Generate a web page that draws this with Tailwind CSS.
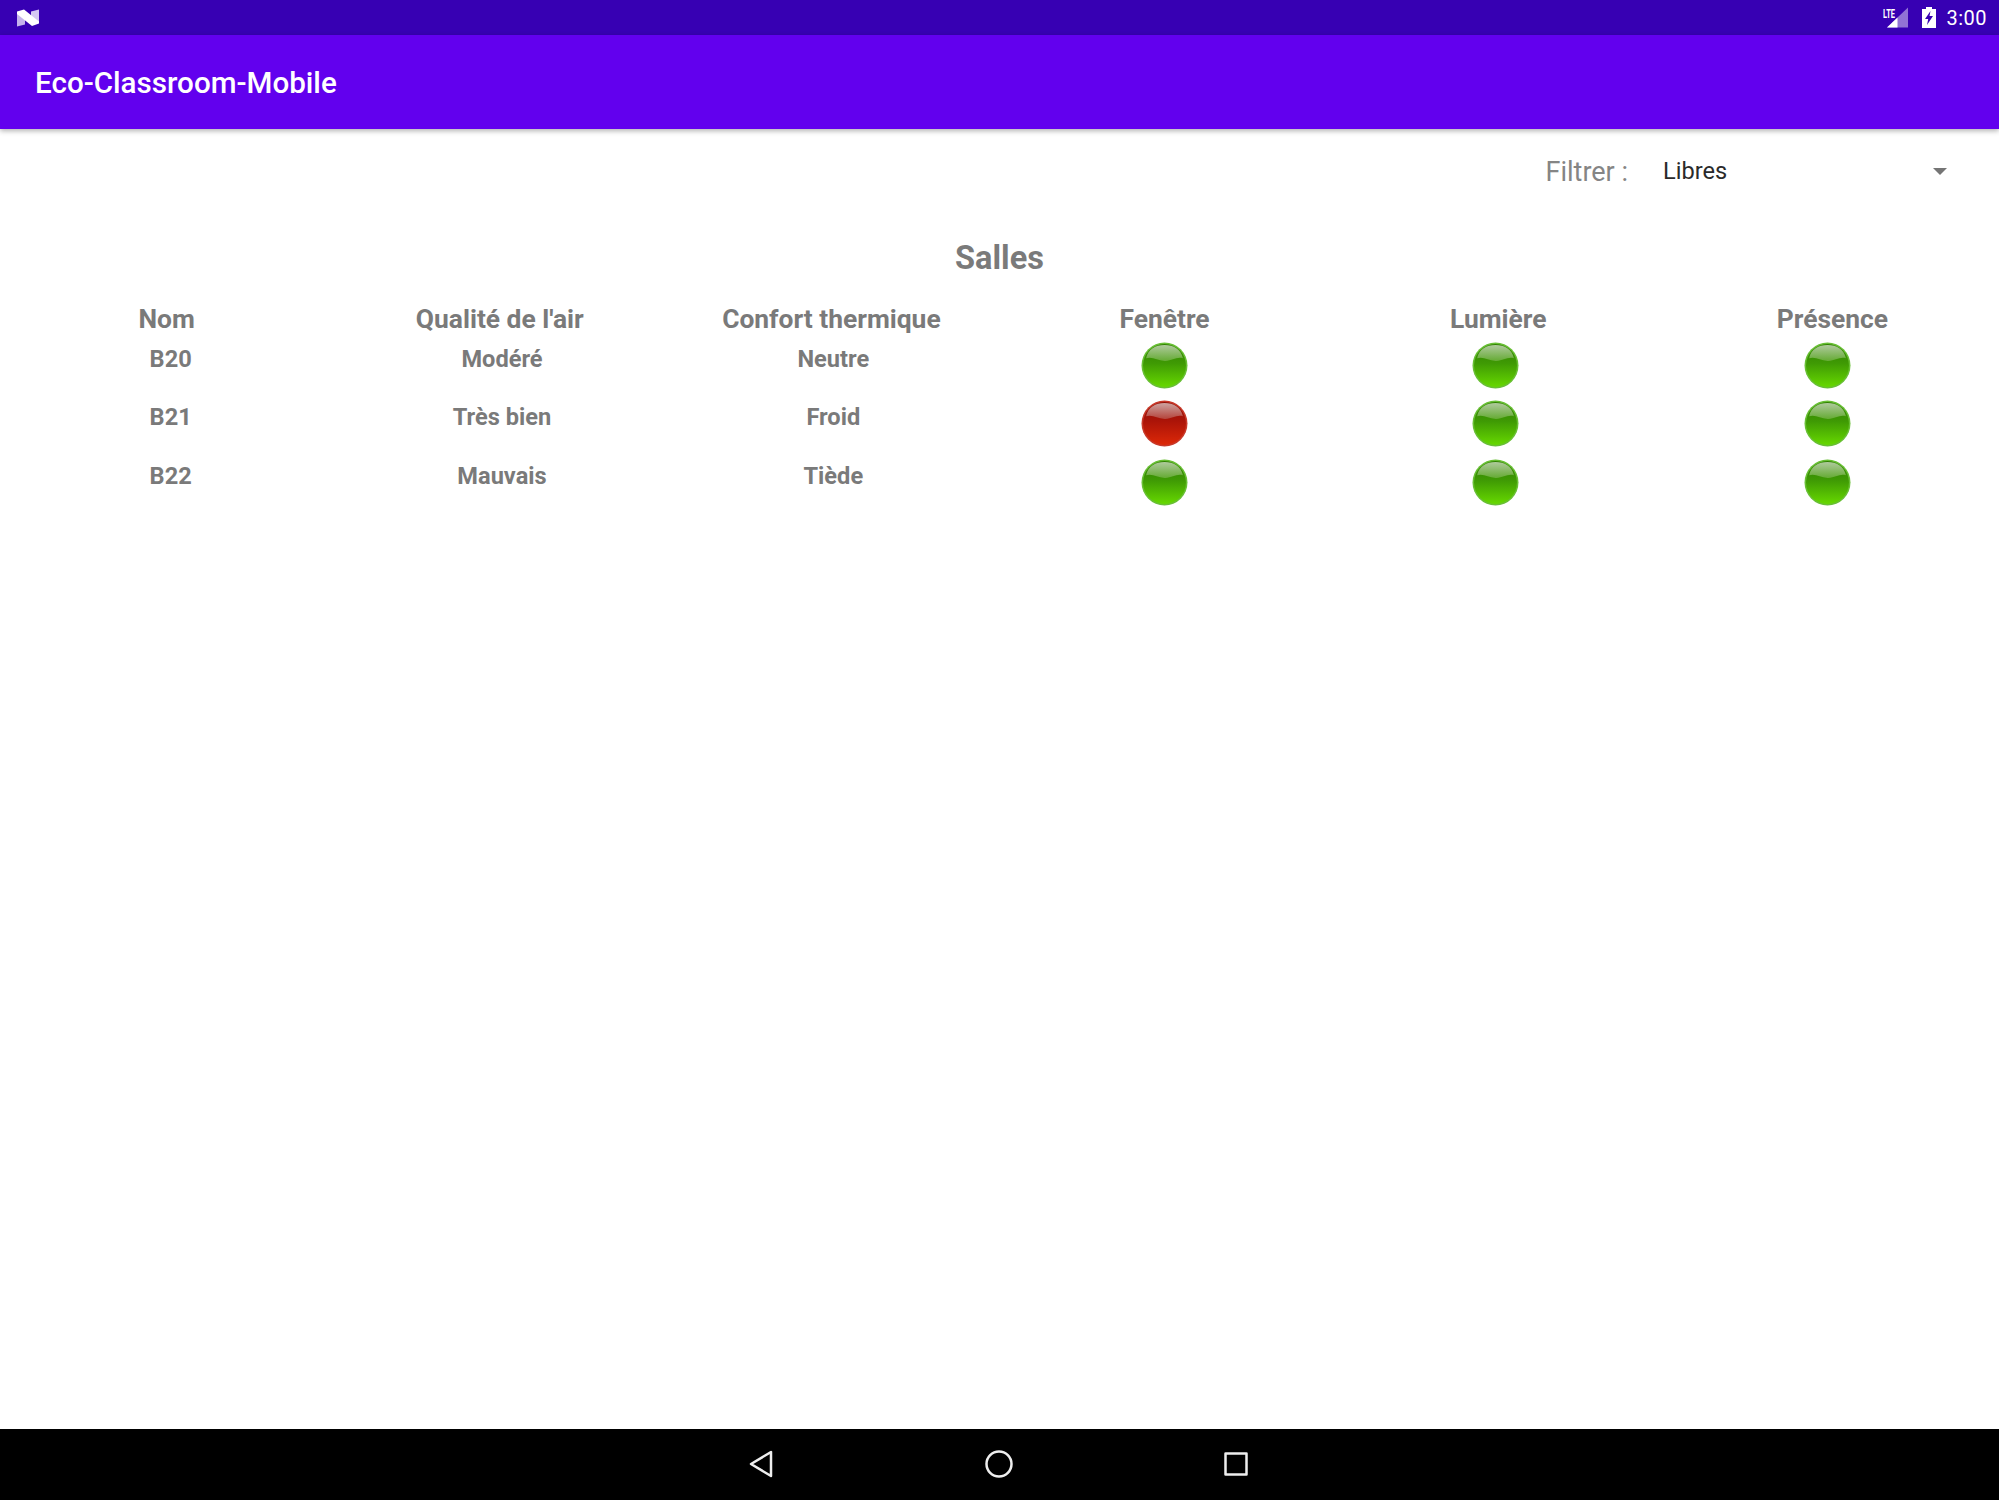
<!DOCTYPE html>
<html lang="fr">
<head>
<meta charset="utf-8">
<title>Eco-Classroom-Mobile</title>
<script src="https://cdn.jsdelivr.net/npm/@tailwindcss/browser@4"></script>
</head>
<body class="bg-white font-['Roboto',sans-serif]">
<svg width="0" height="0" class="absolute">
  <defs>
    <linearGradient id="gb" x1="0" y1="0" x2="0" y2="1"><stop offset="0" stop-color="#2f7f00"/><stop offset="0.45" stop-color="#3f9a04"/><stop offset="1" stop-color="#66d800"/></linearGradient>
    <linearGradient id="gs" x1="0" y1="0" x2="0" y2="1"><stop offset="0" stop-color="#cfdcc4"/><stop offset="1" stop-color="#6fb040"/></linearGradient>
    <linearGradient id="rb" x1="0" y1="0" x2="0" y2="1"><stop offset="0" stop-color="#8f1008"/><stop offset="0.45" stop-color="#ac1408"/><stop offset="1" stop-color="#dc2808"/></linearGradient>
    <linearGradient id="rs" x1="0" y1="0" x2="0" y2="1"><stop offset="0" stop-color="#dcc8c6"/><stop offset="1" stop-color="#b85048"/></linearGradient>
    <symbol id="green" viewBox="0 0 46 46">
      <circle cx="23" cy="23" r="22.5" fill="#68bf34"/>
      <circle cx="23" cy="23" r="21" fill="url(#gb)"/>
      <path d="M5 16C7 7 14 3 23 3s16 4 18 13c-6-2-11 3-18 2.500C16 18 11 14 5 16Z" fill="url(#gs)" opacity=".8"/>
    </symbol>
    <symbol id="red" viewBox="0 0 46 46">
      <circle cx="23" cy="23" r="22.500" fill="#c83828"/>
      <circle cx="23" cy="23" r="21" fill="url(#rb)"/>
      <path d="M5 16C7 7 14 3 23 3s16 4 18 13c-6-2-11 3-18 2.500C16 18 11 14 5 16Z" fill="url(#rs)" opacity=".8"/>
    </symbol>
  </defs>
</svg>
<div class="w-[1999px] h-[1500px] flex flex-col overflow-hidden">
  <!-- status bar -->
  <div class="h-[35px] shrink-0 bg-[#3700b3] flex items-center justify-between pl-[17px] pr-[12px] text-white">
    <svg width="23" height="20" viewBox="0 0 23 20">
      <path d="M0 4 8 8v8.500L0 18.500Z" fill="#c4b2ec"/>
      <path d="M14 3.500 22 1.500V15H14Z" fill="#d6c9f3"/>
      <path d="M0 3.500 7 1.500 22 13.500V15.500L15 18 0 6Z" fill="#fff"/>
    </svg>
    <div class="flex items-center">
      <svg width="27" height="22" viewBox="0 0 27 22" class="mr-[13px] overflow-visible">
        <text x="1" y="10.500" font-family="Roboto" font-size="13" font-weight="700" fill="#fff" textLength="12" lengthAdjust="spacingAndGlyphs">LTE</text>
        <path d="M26 .5v20H5Z" fill="#fff" opacity=".45"/>
        <path d="M15.500 10.500v10H5Z" fill="#fff"/>
      </svg>
      <svg width="14" height="21" viewBox="0 0 14 21" class="mr-[10px]">
        <path fill-rule="evenodd" d="M4 0h6v2h4v19H0V2h4Zm4.500 4L3 12h3.200L5 18l6-9H7.500Z" fill="#fff"/>
      </svg>
      <span class="text-[20px] leading-none tracking-[0.5px]">3:00</span>
    </div>
  </div>
  <!-- app bar -->
  <div class="h-[94px] shrink-0 bg-[#6200ee] flex items-center pl-[35px] pt-[2px] shadow-[0_2px_5px_rgba(0,0,0,0.3)] relative">
    <span class="text-white text-[29.6px] font-medium">Eco-Classroom-Mobile</span>
  </div>
  <!-- content -->
  <div class="flex-1 flex flex-col">
    <div class="h-[65px] mt-[10px] flex items-center justify-end pr-[52px]">
      <span class="text-[27px] text-[#858585] mr-[35px] mt-[1px]">Filtrer :</span>
      <div class="w-[284px] flex items-center justify-between">
        <span class="text-[23.6px] text-[#2a2a2a]">Libres</span>
        <span class="w-0 h-0 border-x-[7px] border-x-transparent border-t-[7px] border-t-[#757575]"></span>
      </div>
    </div>
    <h1 class="text-center text-[32.5px] font-bold text-[#7a7a7a] leading-[38px] mt-[35px]">Salles</h1>
    <div class="grid grid-cols-6 text-center text-[#7a7a7a] text-[26.4px] font-bold leading-[30px] mt-[27px]">
      <div>Nom</div><div>Qualité de l'air</div><div class="pr-[3px]">Confort thermique</div><div class="pr-[3px]">Fenêtre</div><div class="pr-[2px]">Lumière</div><div>Présence</div>
    </div>
    <div class="pl-[5px] pr-[6px] text-[#7a7a7a] text-[23.6px] font-bold">
      <div class="grid grid-cols-6 justify-items-center h-[58px]">
        <div class="leading-[27px] mt-[12px]">B20</div><div class="leading-[27px] mt-[12px]">Modéré</div><div class="leading-[27px] mt-[12px]">Neutre</div>
        <svg class="w-[47px] h-[47px] mt-[8px]"><use href="#green"/></svg><svg class="w-[47px] h-[47px] mt-[8px]"><use href="#green"/></svg><svg class="w-[47px] h-[47px] mt-[8px]"><use href="#green"/></svg>
      </div>
      <div class="grid grid-cols-6 justify-items-center h-[59px]">
        <div class="leading-[27px] mt-[12px]">B21</div><div class="leading-[27px] mt-[12px]">Très bien</div><div class="leading-[27px] mt-[12px]">Froid</div>
        <svg class="w-[47px] h-[47px] mt-[8px]"><use href="#red"/></svg><svg class="w-[47px] h-[47px] mt-[8px]"><use href="#green"/></svg><svg class="w-[47px] h-[47px] mt-[8px]"><use href="#green"/></svg>
      </div>
      <div class="grid grid-cols-6 justify-items-center h-[59px]">
        <div class="leading-[27px] mt-[12px]">B22</div><div class="leading-[27px] mt-[12px]">Mauvais</div><div class="leading-[27px] mt-[12px]">Tiède</div>
        <svg class="w-[47px] h-[47px] mt-[8px]"><use href="#green"/></svg><svg class="w-[47px] h-[47px] mt-[8px]"><use href="#green"/></svg><svg class="w-[47px] h-[47px] mt-[8px]"><use href="#green"/></svg>
      </div>
    </div>
  </div>
  <!-- nav bar -->
  <div class="h-[71px] shrink-0 bg-black relative flex items-center justify-center gap-[211px] pb-[1px] pr-[3px]">
    <svg width="26" height="28" viewBox="0 0 26 28" fill="none" stroke="#eee" stroke-width="2.500" stroke-linejoin="round"><path d="M23 2v24L3 14Z"/></svg>
    <svg width="28" height="28" viewBox="0 0 28 28" fill="none" stroke="#eee" stroke-width="2.500"><circle cx="14" cy="14" r="12.500"/></svg>
    <svg width="24" height="24" viewBox="0 0 24 24" fill="none" stroke="#eee" stroke-width="2.500" stroke-linejoin="round"><rect x="1.500" y="1.500" width="21" height="21"/></svg>
  </div>
</div>
</body>
</html>
